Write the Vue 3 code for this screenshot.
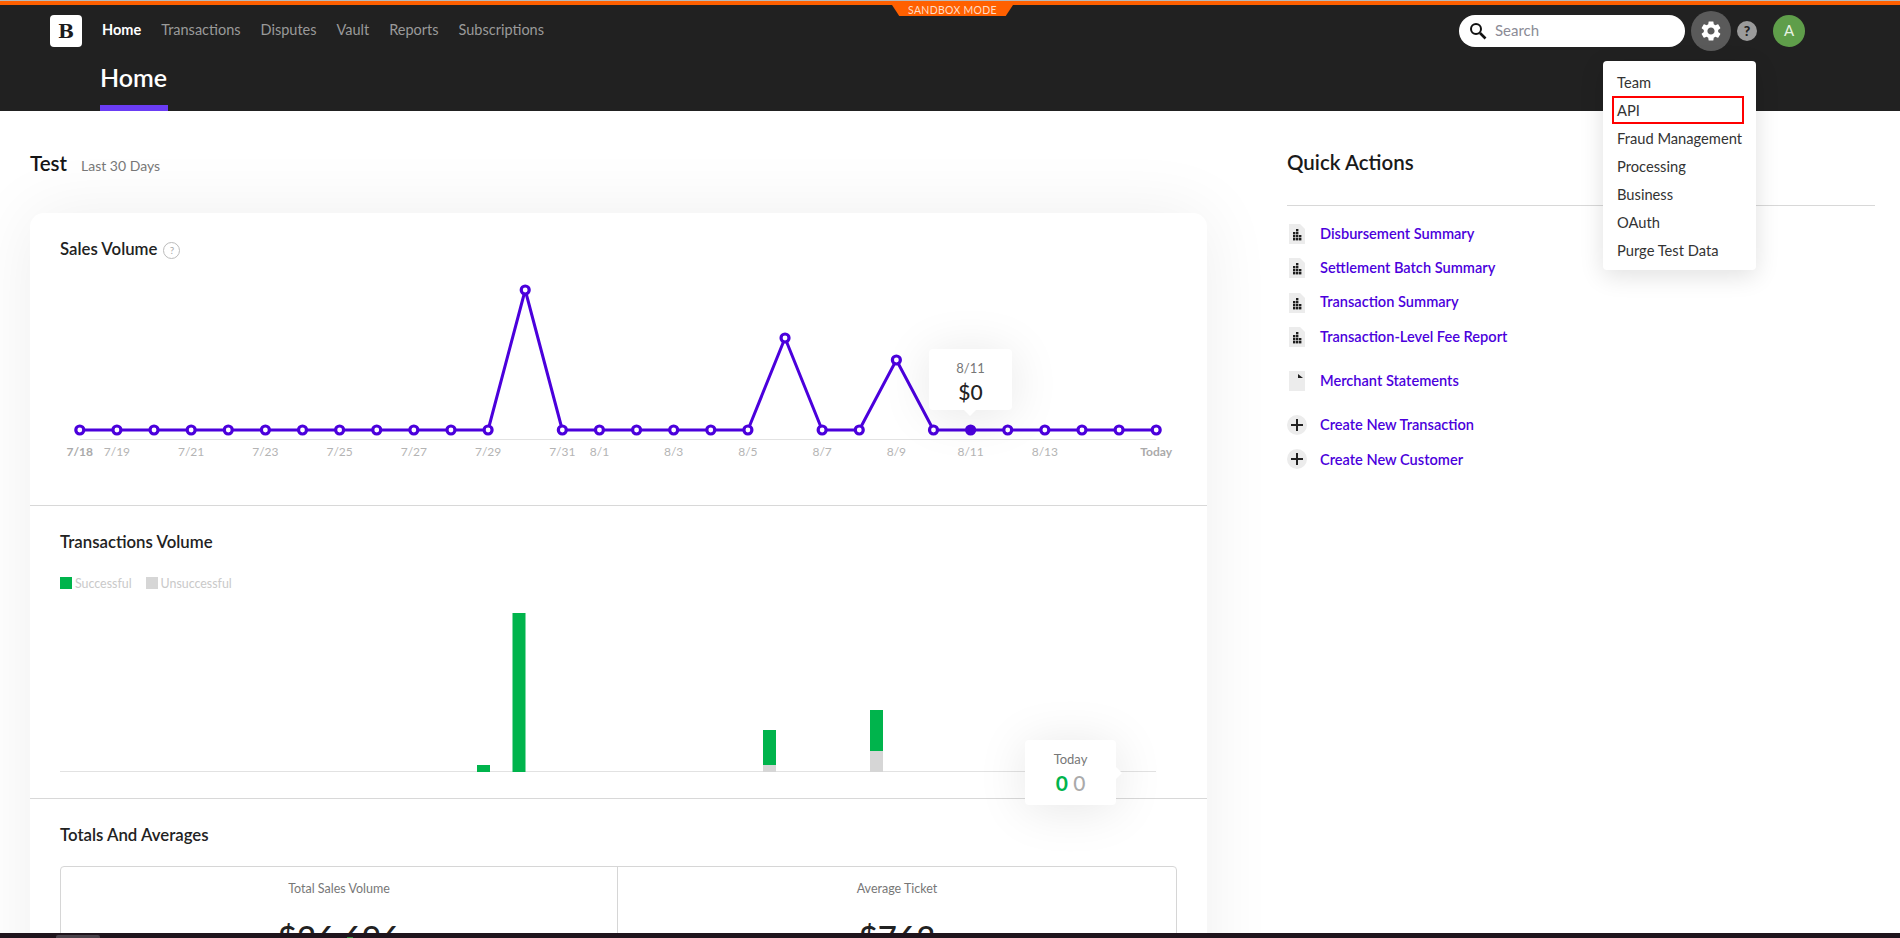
<template>
  <div class="page">
    <header class="topbar">
      <div class="stripe"></div>
      <div class="sandbox">SANDBOX MODE</div>
      <div class="nav-row">
        <div class="logo">B</div>
        <nav class="nav">
          <a v-for="(item, i) in navItems" :key="item" :class="['nav-link', { active: i === 0 }]">{{ item }}</a>
        </nav>
        <div class="tools">
          <div class="search">
            <svg width="18" height="18" viewBox="0 0 18 18" fill="none" stroke="#111" stroke-width="2">
              <circle cx="7" cy="7" r="5" />
              <path d="M11 11l5.5 5.5" stroke-width="2.6" />
            </svg>
            <span class="search-text">Search</span>
          </div>
          <div class="gear">
            <svg width="24" height="24" viewBox="0 0 24 24" fill="#fff">
              <path d="M19.14 12.94c.04-.3.06-.61.06-.94 0-.32-.02-.64-.07-.94l2.03-1.58c.18-.14.23-.41.12-.61l-1.92-3.32c-.12-.22-.37-.29-.59-.22l-2.39.96c-.5-.38-1.03-.7-1.62-.94l-.36-2.54c-.04-.24-.24-.41-.48-.41h-3.84c-.24 0-.43.17-.47.41l-.36 2.54c-.59.24-1.13.57-1.62.94l-2.39-.96c-.22-.08-.47 0-.59.22L2.74 8.87c-.12.21-.08.47.12.61l2.03 1.58c-.05.3-.09.63-.09.94s.02.64.07.94l-2.03 1.58c-.18.14-.23.41-.12.61l1.92 3.32c.12.22.37.29.59.22l2.39-.96c.5.38 1.03.7 1.62.94l.36 2.54c.05.24.24.41.48.41h3.84c.24 0 .44-.17.47-.41l.36-2.54c.59-.24 1.13-.56 1.62-.94l2.39.96c.22.08.47 0 .59-.22l1.92-3.32c.12-.22.07-.47-.12-.61l-2.01-1.58zM12 15.6c-1.98 0-3.6-1.62-3.6-3.6s1.62-3.6 3.6-3.6 3.6 1.62 3.6 3.6-1.62 3.6-3.6 3.6z" />
            </svg>
          </div>
          <div class="help">?</div>
          <div class="avatar">A</div>
        </div>
      </div>
      <div class="page-title">Home</div>
      <ul class="menu">
        <li v-for="item in menuItems" :key="item" :class="['menu-item', { marked: item === 'API' }]">{{ item }}</li>
      </ul>
    </header>

    <main class="main">
      <section class="left">
        <div class="left-head">
          <h2 class="account">Test</h2>
          <span class="range">Last 30 Days</span>
        </div>
        <div class="card">
          <div class="block sales">
            <h3 class="block-title">
              Sales Volume
              <span class="hint">?</span>
            </h3>
            <div class="chart line-chart">
              <svg width="1117" height="210" viewBox="60 270 1117 210">
                <line x1="80" y1="439.5" x2="1156" y2="439.5" stroke="#e2e2e2" />
                <polyline :points="linePoints" fill="none" stroke="#4b00dc" stroke-width="3" stroke-linejoin="round" />
                <circle
                  v-for="(p, i) in points"
                  :key="i"
                  :cx="p.x"
                  :cy="p.y"
                  r="4"
                  :fill="i === 24 ? '#4b00dc' : '#fff'"
                  stroke="#4b00dc"
                  stroke-width="3.2"
                />
                <text
                  v-for="l in axisLabels"
                  :key="l.text"
                  :x="l.x"
                  y="456"
                  text-anchor="middle"
                  :class="['axis-label', { strong: l.strong }]"
                >{{ l.text }}</text>
              </svg>
              <div class="tip tip-sales">
                <div class="tip-label">8/11</div>
                <div class="tip-value">$0</div>
              </div>
            </div>
          </div>

          <div class="block volume">
            <h3 class="block-title">Transactions Volume</h3>
            <div class="legend">
              <span class="swatch ok"></span>
              <span class="legend-text">Successful</span>
              <span class="swatch bad"></span>
              <span class="legend-text">Unsuccessful</span>
            </div>
            <div class="chart bar-chart">
              <svg width="1096" height="173" viewBox="60 600 1096 173">
                <line x1="60" y1="771.5" x2="1156" y2="771.5" stroke="#e2e2e2" />
                <template v-for="b in bars" :key="b.x">
                  <rect :x="b.x" :y="b.top" width="13" :height="b.mid - b.top" fill="#00b44c" />
                  <rect v-if="b.mid < 772" :x="b.x" :y="b.mid" width="13" :height="772 - b.mid" fill="#d6d6d6" />
                </template>
              </svg>
              <div class="tip tip-volume">
                <div class="tip-label">Today</div>
                <div class="tip-value"><span class="green">0</span> <span class="grey">0</span></div>
              </div>
            </div>
          </div>

          <div class="block totals">
            <h3 class="block-title">Totals And Averages</h3>
            <div class="stats">
              <div class="stat">
                <div class="stat-label">Total Sales Volume</div>
                <div class="stat-value">$26,696</div>
              </div>
              <div class="stat">
                <div class="stat-label">Average Ticket</div>
                <div class="stat-value">$763</div>
              </div>
            </div>
          </div>
        </div>
      </section>

      <aside class="right">
        <h2 class="quick-title">Quick Actions</h2>
        <div class="action-group reports">
          <a v-for="name in reports" :key="name" class="action">
            <svg class="file" width="16" height="20" viewBox="0 0 16 20">
              <path d="M0 0h11l5 5v15H0z" fill="#ececec" />
              <g fill="#1c1c1c">
                <rect x="7" y="5" width="2.4" height="2.4" />
                <rect x="4" y="8" width="2.4" height="2.4" />
                <rect x="7" y="8" width="2.4" height="2.4" />
                <rect x="4" y="11" width="2.4" height="2.4" />
                <rect x="7" y="11" width="2.4" height="2.4" />
                <rect x="10" y="11" width="2.4" height="2.4" />
                <rect x="4" y="14" width="2.4" height="2.4" />
                <rect x="7" y="14" width="2.4" height="2.4" />
                <rect x="10" y="14" width="2.4" height="2.4" />
              </g>
            </svg>
            <span>{{ name }}</span>
          </a>
        </div>
        <div class="action-group statements">
          <a class="action">
            <svg class="file" width="16" height="20" viewBox="0 0 16 20">
              <path d="M0 0h16v20H0z" fill="#ececec" />
              <path d="M9 3l5 4H9z" fill="#222" />
            </svg>
            <span>Merchant Statements</span>
          </a>
        </div>
        <div class="action-group creates">
          <a v-for="name in creates" :key="name" class="action create">
            <span class="plus">
              <svg width="12" height="12" viewBox="0 0 12 12" fill="#222">
                <path d="M5 0h2v5h5v2H7v5H5V7H0V5h5z" />
              </svg>
            </span>
            <span>{{ name }}</span>
          </a>
        </div>
      </aside>
    </main>

    <div class="dock">
      <span class="dock-tab"></span>
      <span class="dock-dot"></span>
    </div>
  </div>
</template>

<script setup>
import { computed } from 'vue'

const navItems = ['Home', 'Transactions', 'Disputes', 'Vault', 'Reports', 'Subscriptions']
const menuItems = ['Team', 'API', 'Fraud Management', 'Processing', 'Business', 'OAuth', 'Purge Test Data']
const reports = ['Disbursement Summary', 'Settlement Batch Summary', 'Transaction Summary', 'Transaction-Level Fee Report']
const creates = ['Create New Transaction', 'Create New Customer']

const peaks = { 12: 290, 19: 338, 22: 360 }
const stepX = (1156.2 - 79.8) / 29
const xAt = (i) => 79.8 + i * stepX

const points = Array.from({ length: 30 }, (_, i) => ({
  x: xAt(i),
  y: peaks[i] || 430
}))

const linePoints = computed(() => points.map((p) => `${p.x},${p.y}`).join(' '))

const axisLabels = [
  [0, '7/18', true], [1, '7/19'], [3, '7/21'], [5, '7/23'], [7, '7/25'], [9, '7/27'], [11, '7/29'],
  [13, '7/31'], [14, '8/1'], [16, '8/3'], [18, '8/5'], [20, '8/7'], [22, '8/9'], [24, '8/11'],
  [26, '8/13'], [29, 'Today', true]
].map(([i, text, strong]) => ({ x: xAt(i), text, strong }))

const bars = [
  { x: 477, top: 765, mid: 772 },
  { x: 512.5, top: 613, mid: 772 },
  { x: 763, top: 730, mid: 765 },
  { x: 870, top: 710, mid: 751 }
]
</script>

<style>
html, body {
  margin: 0;
  height: 100%;
  overflow: hidden;
  background: #fff;
}
</style>

<style scoped>
.page {
  display: flex;
  flex-direction: column;
  height: 938px;
  overflow: hidden;
  font-family: Lato, "Open Sans", sans-serif;
  color: #222;
  background: #fff;
}

.topbar {
  position: relative;
  flex: none;
  height: 111px;
  background: #212121;
  z-index: 3;
}

.stripe {
  height: 4px;
  background: #ff6000;
  border-top: 1px solid #b9b9b9;
}

.sandbox {
  position: absolute;
  top: 5px;
  left: 892px;
  width: 121px;
  height: 11px;
  line-height: 11px;
  text-align: center;
  font-size: 10.5px;
  letter-spacing: 0.3px;
  color: #ffdcc6;
  background: #ff6000;
  clip-path: polygon(0 0, 100% 0, 94% 100%, 6% 100%);
}

.nav-row {
  display: flex;
  align-items: center;
  height: 32px;
  margin-top: 10px;
  padding-left: 50px;
}

.logo {
  width: 32px;
  height: 32px;
  border-radius: 4px;
  background: #fff;
  color: #1c1c1c;
  font-family: "DejaVu Serif", serif;
  font-weight: 700;
  font-size: 19px;
  line-height: 32px;
  text-align: center;
}

.nav {
  display: flex;
  gap: 20px;
  margin-left: 20px;
  padding-bottom: 3px;
}

.nav-link {
  font-size: 14.5px;
  color: #9a9a9a;
}

.nav-link.active {
  color: #fff;
  font-weight: 700;
}

.tools {
  display: flex;
  align-items: center;
  margin-left: auto;
  padding-right: 95px;
}

.search {
  display: flex;
  align-items: center;
  box-sizing: border-box;
  width: 226px;
  height: 32px;
  padding-left: 10px;
  border-radius: 16px;
  background: #fff;
}

.search-text {
  margin-left: 8px;
  padding-bottom: 2px;
  font-size: 15px;
  color: #8b8b96;
}

.gear {
  display: flex;
  align-items: center;
  justify-content: center;
  width: 40px;
  height: 40px;
  margin-left: 6px;
  border-radius: 50%;
  background: #5a5a5a;
}

.help {
  width: 20px;
  height: 20px;
  margin-left: 6px;
  border-radius: 50%;
  background: #9b9b9b;
  color: #212121;
  font-size: 14px;
  font-weight: 900;
  line-height: 20px;
  text-align: center;
}

.avatar {
  width: 32px;
  height: 32px;
  margin-left: 16px;
  border-radius: 50%;
  background: #5f9e4a;
  color: #e8f2e2;
  font-size: 15px;
  line-height: 30px;
  text-align: center;
}

.page-title {
  box-sizing: border-box;
  width: 68px;
  height: 59px;
  margin: 5px 0 0 100px;
  padding-top: 12px;
  border-bottom: 6px solid #6a3cf5;
  color: #fff;
  font-size: 25px;
  font-weight: 600;
  line-height: 26px;
  white-space: nowrap;
}

.menu {
  position: absolute;
  top: 61px;
  left: 1603px;
  box-sizing: border-box;
  width: 153px;
  height: 209px;
  margin: 0;
  padding: 7px 0 0 9px;
  list-style: none;
  border-radius: 4px;
  background: #fff;
  box-shadow: 0 6px 24px rgba(0, 0, 0, 0.12);
}

.menu-item {
  box-sizing: border-box;
  width: 132px;
  height: 28px;
  padding-left: 3px;
  border: 2px solid transparent;
  font-size: 14.7px;
  line-height: 24px;
  color: #333;
  white-space: nowrap;
}

.menu-item.marked {
  border-color: #f00;
}

.main {
  flex: 1;
  display: flex;
  gap: 80px;
  min-height: 0;
  padding: 40px 25px 0 30px;
  overflow: hidden;
}

.left {
  flex: none;
  width: 1177px;
}

.left-head {
  display: flex;
  align-items: baseline;
  height: 26px;
  margin-bottom: 36px;
}

.account {
  margin: -1px 0 0;
  font-size: 20.5px;
  font-weight: 600;
  line-height: 26px;
  color: #151515;
}

.range {
  margin-left: 14px;
  font-size: 14px;
  color: #777;
}

.card {
  border-radius: 14px;
  background: #fff;
  box-shadow: 0 0 70px rgba(0, 0, 0, 0.07);
}

.block {
  padding: 24px 30px 0;
  border-bottom: 1px solid #d8d8d8;
}

.block-title {
  display: flex;
  align-items: center;
  box-sizing: border-box;
  height: 24px;
  margin: 0;
  padding-bottom: 1px;
  font-size: 16.8px;
  font-weight: 600;
  line-height: 22px;
  color: #222;
}

.hint {
  width: 15px;
  height: 15px;
  margin: 3px 0 0 6px;
  border: 1px solid #bbb;
  border-radius: 50%;
  color: #aaa;
  font-size: 10px;
  font-weight: 400;
  line-height: 15px;
  text-align: center;
}

.chart {
  position: relative;
}

.chart svg {
  display: block;
}

.line-chart {
  margin-top: 9px;
  padding-bottom: 25px;
}

.axis-label {
  font-size: 12px;
  fill: #b4b4b4;
}

.axis-label.strong {
  font-weight: 700;
  fill: #aaa;
}

.legend {
  display: flex;
  align-items: center;
  height: 18px;
  margin-top: 20px;
}

.swatch {
  width: 12px;
  height: 12px;
}

.swatch.ok {
  background: #00b44c;
}

.swatch.bad {
  margin-left: 14px;
  background: #d6d6d6;
}

.legend-text {
  margin-left: 3px;
  font-size: 12.4px;
  color: #c9c9c9;
}

.bar-chart {
  margin-top: 8px;
  padding-bottom: 25px;
}

.tip {
  position: absolute;
  z-index: 2;
  border-radius: 4px;
  background: #fff;
  box-shadow: 0 4px 50px rgba(0, 0, 0, 0.1);
  text-align: center;
}

.tip::after {
  content: "";
  position: absolute;
  width: 0;
  height: 0;
}

.tip-sales {
  left: 869px;
  top: 79px;
  width: 83px;
  height: 61px;
}

.tip-sales::after {
  left: 35px;
  bottom: -6px;
  border-top: 6px solid #fff;
  border-left: 6px solid transparent;
  border-right: 6px solid transparent;
}

.tip-volume {
  left: 965px;
  top: 140px;
  width: 91px;
  height: 65px;
}

.tip-volume::after {
  right: -6px;
  top: 27px;
  border-left: 6px solid #fff;
  border-top: 6px solid transparent;
  border-bottom: 6px solid transparent;
}

.tip-label {
  margin-top: 11px;
  font-size: 13px;
  line-height: 16px;
  color: #777;
}

.tip-value {
  margin-top: 4px;
  font-size: 21px;
  font-weight: 500;
  line-height: 24px;
  color: #222;
}

.green {
  color: #00b44c;
  font-weight: 700;
}

.grey {
  color: #aaa;
}

.totals {
  padding-bottom: 40px;
  border-bottom: 0;
}

.stats {
  display: flex;
  margin-top: 19px;
  border: 1.5px solid #d6d6d6;
  border-radius: 4px;
}

.stat {
  flex: 1;
  height: 120px;
  padding-top: 13px;
  text-align: center;
}

.stat:first-child {
  flex: 0 0 556px;
}

.stat + .stat {
  border-left: 1.5px solid #d6d6d6;
}

.stat-label {
  font-size: 12.5px;
  line-height: 18px;
  color: #777;
}

.stat-value {
  margin-top: 14px;
  font-size: 33px;
  font-weight: 500;
  line-height: 50px;
  color: #222;
}

.right {
  flex: 1;
  min-width: 0;
}

.quick-title {
  height: 26px;
  margin: -2px 0 30px;
  font-size: 20.5px;
  font-weight: 600;
  line-height: 26px;
  color: #1a1a1a;
}

.action-group {
  padding-top: 18px;
}

.reports {
  border-top: 1px solid #d8d8d8;
}

.reports .action span {
  padding-bottom: 2px;
}

.statements {
  padding-top: 9px;
}

.creates {
  padding-top: 10px;
}

.action {
  display: flex;
  align-items: center;
  height: 20px;
  margin-bottom: 14.4px;
  color: #4b00dc;
  font-size: 14.6px;
  font-weight: 600;
}

.file {
  flex: none;
  margin: 0 15px 0 2px;
}

.plus {
  display: flex;
  align-items: center;
  justify-content: center;
  flex: none;
  width: 20px;
  height: 20px;
  margin-right: 13px;
  border-radius: 50%;
  background: #ececec;
}

.dock {
  position: relative;
  flex: none;
  height: 5px;
  background: #1f141c;
}

.dock-tab {
  position: absolute;
  top: 2px;
  left: 56px;
  width: 44px;
  height: 3px;
  border-radius: 2px 2px 0 0;
  background: #4a424a;
}

.dock-dot {
  position: absolute;
  bottom: 0;
  left: 347px;
  width: 6px;
  height: 1px;
  background: #2e8b3d;
}
</style>
